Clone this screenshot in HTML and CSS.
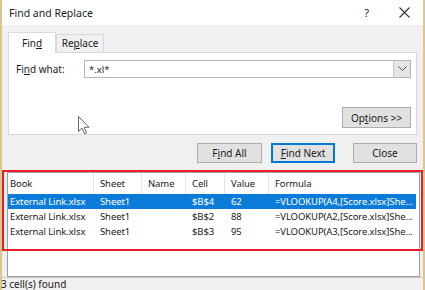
FILE: index.html
```html
<!DOCTYPE html>
<html lang="en">

<head>
  <meta charset="UTF-8" />
  <title>Find and Replace</title>
  <link rel="stylesheet" href="styles.css">
</head>

<body>
  <div class="dialog">
    <div class="titlebar">
      <span class="title">Find and Replace</span>
      <span class="help">?</span>
      <svg class="close-x" width="11" height="11" viewBox="0 0 11 11">
        <path d="M0.5 0.5 L10.5 10.5 M10.5 0.5 L0.5 10.5" stroke="#333" stroke-width="1.1" fill="none" />
      </svg>
    </div>

    <div class="tabs">
      <div class="tab active">Fin<u>d</u></div>
      <div class="tab">Re<u>p</u>lace</div>
    </div>

    <div class="panel">
      <div class="find-row">
        <label>Fi<u>n</u>d what:</label>
        <div class="combo">
          <span class="combo-text">*.xl*</span>
          <span class="combo-btn">
            <svg width="9" height="6" viewBox="0 0 9 6">
              <path d="M0.5 0.5 L4.5 4.5 L8.5 0.5" stroke="#555" stroke-width="1" fill="none" />
            </svg>
          </span>
        </div>
      </div>
      <div class="options-row">
        <button class="btn options">Op<u>t</u>ions &gt;&gt;</button>
      </div>
    </div>

    <div class="actions">
      <button class="btn find-all">F<u>i</u>nd All</button>
      <button class="btn default"><u>F</u>ind Next</button>
      <button class="btn">Close</button>
    </div>

    <div class="results">
      <div class="row head">
        <span>Book</span><span>Sheet</span><span>Name</span><span>Cell</span><span>Value</span><span>Formula</span>
      </div>
      <div class="row selected">
        <span>External Link.xlsx</span><span>Sheet1</span><span></span><span>$B$4</span><span>62</span><span>=VLOOKUP(A4,[Score.xlsx]She...</span>
      </div>
      <div class="row">
        <span>External Link.xlsx</span><span>Sheet1</span><span></span><span>$B$2</span><span>88</span><span>=VLOOKUP(A2,[Score.xlsx]She...</span>
      </div>
      <div class="row">
        <span>External Link.xlsx</span><span>Sheet1</span><span></span><span>$B$3</span><span>95</span><span>=VLOOKUP(A3,[Score.xlsx]She...</span>
      </div>
    </div>

    <div class="status">3 cell(s) found</div>

    <!-- annotation box and mouse pointer drawn over the dialog -->
    <div class="highlight"></div>
    <svg class="cursor" width="12" height="19" viewBox="0 0 12 19">
      <path d="M0.5 0.5 L0.5 15.5 L4 12 L6.5 17.8 L8.6 16.9 L6.2 11.3 L11 11.3 Z" fill="#fff" stroke="#666" stroke-width="1" />
    </svg>
  </div>
</body>

</html>
```

FILE: styles.css
```css
* {
  margin: 0;
  padding: 0;
  box-sizing: border-box;
}

body {
  font-family: 'Noto Sans', 'Open Sans', sans-serif;
  font-size: 10px;
  color: #1a1a1a;
  background: #fff;
  width: 425px;
  height: 290px;
  overflow: hidden;
}

.dialog {
  position: relative;
  height: 290px;
  background: #f0f0f0;
  border-left: 2px solid #dcc690;
  border-right: 2px solid #dcc690;
}

.titlebar {
  height: 25px;
  background: #fff;
  display: flex;
  align-items: center;
  padding-left: 7px;
}

.title {
  font-size: 10.5px;
  flex: 1;
}

.help {
  font-size: 11px;
  margin-right: 30px;
}

.close-x {
  margin-right: 13px;
}

.tabs {
  display: flex;
  align-items: flex-end;
  height: 20px;
  margin-top: 7px;
  padding-left: 6px;
}

.tab {
  width: 48px;
  height: 18px;
  background: #f0f0f0;
  border: 1px solid #d9d9d9;
  border-bottom: none;
  text-align: center;
  line-height: 17px;
}

.tab.active {
  width: 48px;
  height: 21px;
  background: #fff;
  margin-bottom: -1px;
  position: relative;
  z-index: 1;
  line-height: 20px;
}

.panel {
  height: 83px;
  margin: 0 6px;
  background: #fff;
  border: 1px solid #d9d9d9;
  padding: 7px 5px 0 7px;
}

.find-row {
  display: flex;
  align-items: center;
  height: 18px;
}

.find-row label {
  width: 68px;
}

.combo {
  flex: 1;
  height: 18px;
  display: flex;
  align-items: center;
  border: 1px solid #b5b5b5;
}

.combo-text {
  flex: 1;
  padding-left: 4px;
  font-size: 9.5px;
}

.combo-btn {
  width: 17px;
  height: 16px;
  background: #e5e5e5;
  border-left: 1px solid #c8c8c8;
  display: flex;
  align-items: center;
  justify-content: center;
}

.options-row {
  display: flex;
  justify-content: flex-end;
  margin-top: 29px;
}

.btn {
  font-family: inherit;
  font-size: 10px;
  color: #1a1a1a;
  background: #e1e1e1;
  border: 1px solid #adadad;
  height: 20px;
  width: 64px;
}

.btn.options {
  width: 69px;
  height: 21px;
}

.actions {
  display: flex;
  justify-content: flex-end;
  margin-top: 8px;
  padding-right: 6px;
}

.btn.find-all {
  width: 65px;
  margin-right: 9px;
}

.btn.default {
  border-color: #0078d7;
  box-shadow: inset 0 0 0 1px #0078d7;
  margin-right: 18px;
}

.results {
  height: 105px;
  margin: 9px 3px 0 5px;
  background: #fff;
  border: 1px solid #a0a0a0;
  font-size: 9.5px;
  letter-spacing: -0.1px;
}

.row {
  display: grid;
  grid-template-columns: 86px 48px 44px 39px 44px 1fr;
  height: 15px;
  align-items: center;
  margin-right: 3px;
  white-space: nowrap;
}

.row span {
  padding-left: 6px;
  overflow: hidden;
}

.row span:first-child {
  padding-left: 2px;
}

.row.head {
  height: 21px;
  margin-right: 0;
}

.row.head span {
  height: 21px;
  line-height: 21px;
  border-right: 1px solid #e5e5e5;
}

.row.head span:last-child {
  border-right: none;
}

.row.selected {
  background: #0a7bd8;
  color: #fff;
}

.status {
  height: 13px;
  line-height: 13px;
  border-top: 1px solid #c8c8c8;
  margin-left: -1px;
}

.highlight {
  position: absolute;
  left: 0;
  top: 170px;
  width: 421px;
  height: 81px;
  border: 2px solid #ec1c2a;
}

.cursor {
  position: absolute;
  left: 76px;
  top: 116px;
}
```
